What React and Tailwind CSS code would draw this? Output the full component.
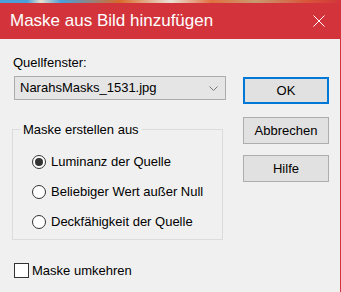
import React from "react";

// ─── MASK DIALOG ──────────────────────────────────────────────────────────────
// Windows-style "Maske aus Bild hinzufügen" dialog with red accent title bar.

const radios = [
  { id: "lum", label: "Luminanz der Quelle", checked: true },
  { id: "any", label: "Beliebiger Wert außer Null" },
  { id: "opa", label: "Deckfähigkeit der Quelle" },
];

function Radio({ checked }) {
  return (
    <span className="w-[14px] h-[14px] rounded-full border border-[#333] bg-white flex items-center justify-center shrink-0">
      {checked && <span className="w-[8px] h-[8px] rounded-full bg-[#333]" />}
    </span>
  );
}

function Button({ children, primary, className = "" }) {
  return (
    <button
      className={`w-[86px] h-[27px] bg-[#e1e1e1] text-black flex items-center justify-center ${
        primary ? "border-2 border-[#0078d7]" : "border border-[#adadad]"
      } ${className}`}
    >
      {children}
    </button>
  );
}

export default function App() {
  return (
    <div className="w-[341px] h-[292px] flex flex-col bg-[#f0f0f0] text-[13px] text-black font-['Segoe_UI','Liberation_Sans',sans-serif] overflow-hidden">
      <div className="h-[3px] shrink-0 bg-[linear-gradient(90deg,#4a9fd8_0%,#4a9fd8_8%,#e8e0d0_12%,#4a9fd8_18%,#d86a2a_35%,#e9e2d8_50%,#e07040_62%,#c89a70_75%,#d8553a_90%,#d3343b_100%)]" />
      <div className="h-[36px] shrink-0 bg-[#d3343b] flex items-center pl-[10px] pr-[16px] text-white text-[17px]">
        <span className="pb-[1px]">Maske aus Bild hinzufügen</span>
        <svg className="ml-auto" width="12" height="12" viewBox="0 0 12 12" fill="none" stroke="white" strokeWidth="1">
          <path d="M0.5 0.5 L11.5 11.5 M11.5 0.5 L0.5 11.5" />
        </svg>
      </div>

      <div className="flex-1 flex border-r border-[#d3343b]">
        <div className="flex flex-col">
          <div className="mt-[15px] ml-[13px] leading-[17px]">Quellfenster:</div>
          <div className="mt-[5px] ml-[14px] w-[212px] h-[24px] bg-[#e5e5e5] border border-[#acacac] flex items-center pl-[5px] pr-[7px]">
            <span>NarahsMasks_1531.jpg</span>
            <svg className="ml-auto" width="9" height="5" viewBox="0 0 9 5" fill="none" stroke="#777" strokeWidth="1">
              <path d="M0.5 0.5 L4.5 4.5 L8.5 0.5" />
            </svg>
          </div>

          <fieldset className="mt-[21px] ml-[12px] w-[211px] h-[119px] border border-[#dcdcdc]">
            <legend className="ml-[7px] px-[3px] leading-[17px]">Maske erstellen aus</legend>
            <div className="flex flex-col gap-[10px] mt-[14px] pl-[19px]">
              {radios.map((r) => (
                <label key={r.id} className="flex items-center gap-[5px] h-[20px]">
                  <Radio checked={r.checked} />
                  <span>{r.label}</span>
                </label>
              ))}
            </div>
          </fieldset>

          <label className="mt-[21px] ml-[14px] flex items-center gap-[3px]">
            <span className="w-[15px] h-[15px] border border-[#333] bg-white shrink-0" />
            <span>Maske umkehren</span>
          </label>
        </div>

        <div className="ml-auto mr-[11px] pt-[38px] flex flex-col">
          <Button primary>OK</Button>
          <Button className="mt-[13px]">Abbrechen</Button>
          <Button className="mt-[11px]">Hilfe</Button>
        </div>
      </div>
    </div>
  );
}
